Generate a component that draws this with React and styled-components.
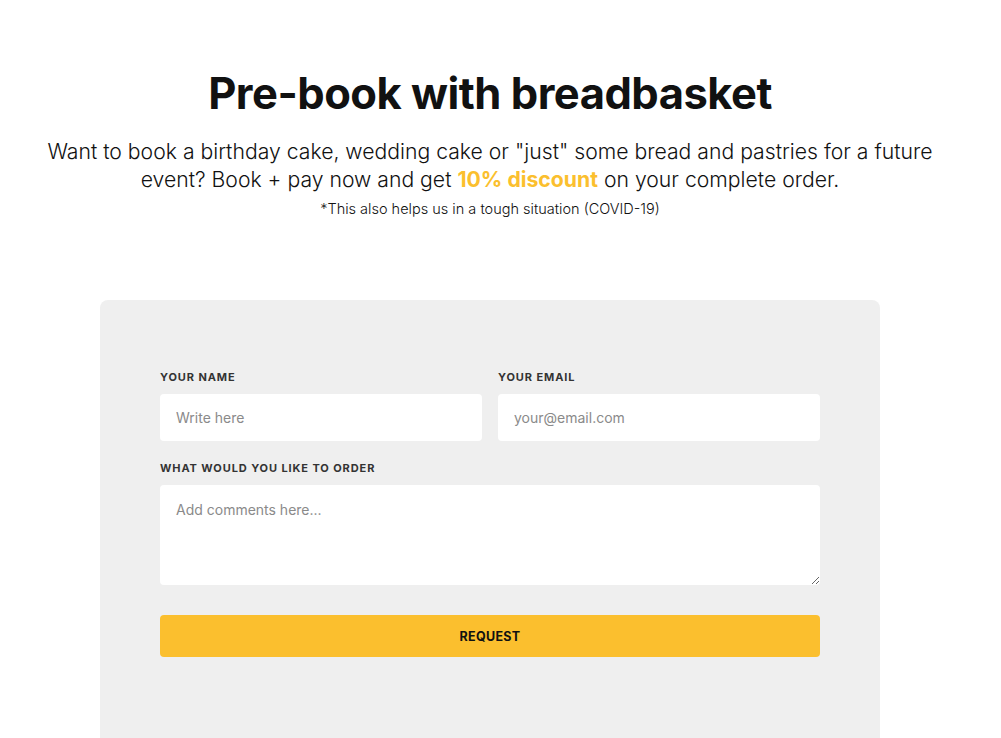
import React from 'react';
import styled, { createGlobalStyle } from 'styled-components';

const GlobalStyle = createGlobalStyle`
    body {
        margin: 0;
        background: #ffffff;
        font-family: Inter, "Noto Sans", sans-serif;
        color: #111111;
    }
`;

const Page = styled.div`
    width: 980px;
    padding-top: 67px;
    display: flex;
    flex-direction: column;
    align-items: center;
`;

const Title = styled.h1`
    margin: 0;
    font-size: 43.5px;
    font-weight: 700;
    letter-spacing: -0.5px;
    line-height: 52px;
    color: #111111;
`;

const Lead = styled.p`
    margin: 18px 0 0;
    max-width: 940px;
    text-align: center;
    font-size: 21.2px;
    font-weight: 300;
    line-height: 28px;
    color: #111111;
`;

const Highlight = styled.strong`
    color: #fbbf2e;
    font-weight: 700;
`;

const Note = styled.p`
    margin: 6px 0 0;
    font-size: 14.5px;
    font-weight: 300;
    line-height: 20px;
`;

const Card = styled.form`
    margin-top: 81px;
    width: 780px;
    box-sizing: border-box;
    padding: 69px 60px 110px;
    background: #efefef;
    border-radius: 8px;
    display: grid;
    grid-template-columns: 1fr 1fr;
    column-gap: 16px;
    row-gap: 19px;
`;

const Field = styled.label`
    display: flex;
    flex-direction: column;
    gap: 9px;
    grid-column: ${(p) => (p.$wide ? '1 / -1' : 'auto')};
`;

const Label = styled.span`
    font-size: 11px;
    font-weight: 700;
    letter-spacing: 0.9px;
    text-transform: uppercase;
    color: #333333;
    line-height: 16px;
`;

const Input = styled.input`
    height: 47px;
    box-sizing: border-box;
    border: 0;
    border-radius: 4px;
    background: #ffffff;
    padding: 0 16px;
    font-family: inherit;
    font-size: 14px;
    outline: none;
    &::placeholder {
        color: #8a8a8a;
    }
`;

const TextArea = styled.textarea`
    height: 100px;
    box-sizing: border-box;
    border: 0;
    border-radius: 4px;
    background: #ffffff;
    padding: 16px 16px;
    font-family: inherit;
    font-size: 14px;
    outline: none;
    resize: vertical;
    &::placeholder {
        color: #8a8a8a;
    }
`;

const Button = styled.button`
    grid-column: 1 / -1;
    margin-top: 11px;
    height: 42px;
    border: 0;
    border-radius: 4px;
    background: #fbbf2e;
    color: #111111;
    font-family: inherit;
    font-size: 12.5px;
    font-weight: 700;
    letter-spacing: 0.3px;
    cursor: pointer;
`;

const App = () => {
    return (
        <>
            <GlobalStyle />
            <Page>
                <Title>Pre-book with breadbasket</Title>
                <Lead>
                    Want to book a birthday cake, wedding cake or "just" some bread and pastries for a future
                    event? Book + pay now and get <Highlight>10% discount</Highlight> on your complete order.
                </Lead>
                <Note>*This also helps us in a tough situation (COVID-19)</Note>
                <Card onSubmit={(e) => e.preventDefault()}>
                    <Field>
                        <Label>Your name</Label>
                        <Input type="text" placeholder="Write here" />
                    </Field>
                    <Field>
                        <Label>Your email</Label>
                        <Input type="email" placeholder="your@email.com" />
                    </Field>
                    <Field $wide>
                        <Label>What would you like to order</Label>
                        <TextArea placeholder="Add comments here..." />
                    </Field>
                    <Button type="submit">REQUEST</Button>
                </Card>
            </Page>
        </>
    );
};

export default App;
